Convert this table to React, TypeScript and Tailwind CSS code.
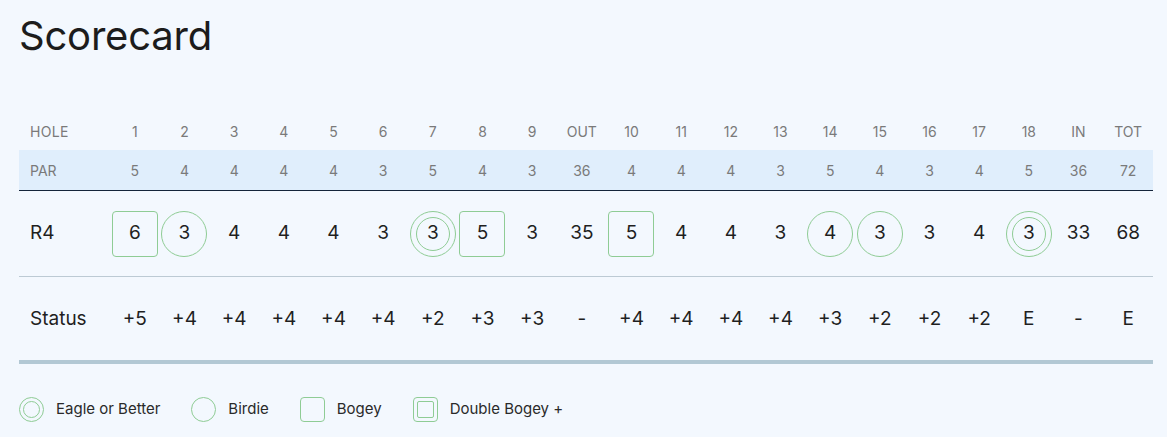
import React from 'react';

type Mark = 'eagle' | 'birdie' | 'bogey' | 'double' | null;

const holes = ['1', '2', '3', '4', '5', '6', '7', '8', '9', 'OUT', '10', '11', '12', '13', '14', '15', '16', '17', '18', 'IN', 'TOT'];
const par = ['5', '4', '4', '4', '4', '3', '5', '4', '3', '36', '4', '4', '4', '3', '5', '4', '3', '4', '5', '36', '72'];
const score = ['6', '3', '4', '4', '4', '3', '3', '5', '3', '35', '5', '4', '4', '3', '4', '3', '3', '4', '3', '33', '68'];
const marks: Mark[] = ['bogey', 'birdie', null, null, null, null, 'eagle', 'bogey', null, null, 'bogey', null, null, null, 'birdie', 'birdie', null, null, 'eagle', null, null];
const status = ['+5', '+4', '+4', '+4', '+4', '+4', '+2', '+3', '+3', '-', '+4', '+4', '+4', '+4', '+3', '+2', '+2', '+2', 'E', '-', 'E'];

const grid = 'grid grid-cols-[91px_repeat(21,minmax(0,1fr))] items-center';

function ScoreCell({ value, mark }: { value: string; mark: Mark }) {
  if (mark === 'bogey') {
    return (
      <div className="flex h-[46px] w-[46px] items-center justify-center rounded-[4px] border border-[#8fcc95]">{value}</div>
    );
  }
  if (mark === 'birdie') {
    return (
      <div className="flex h-[46px] w-[46px] items-center justify-center rounded-full border border-[#8fcc95]">{value}</div>
    );
  }
  if (mark === 'eagle') {
    return (
      <div className="flex h-[46px] w-[46px] items-center justify-center rounded-full border border-[#8fcc95]">
        <div className="flex h-[34px] w-[34px] items-center justify-center rounded-full border border-[#8fcc95]">{value}</div>
      </div>
    );
  }
  return <div className="flex h-[46px] w-[46px] items-center justify-center">{value}</div>;
}

function LegendIcon({ kind }: { kind: Exclude<Mark, null> }) {
  if (kind === 'eagle') {
    return (
      <div className="flex h-[25px] w-[25px] items-center justify-center rounded-full border border-[#8fcc95]">
        <div className="h-[17px] w-[17px] rounded-full border border-[#8fcc95]" />
      </div>
    );
  }
  if (kind === 'birdie') {
    return <div className="h-[25px] w-[25px] rounded-full border border-[#8fcc95]" />;
  }
  if (kind === 'bogey') {
    return <div className="h-[25px] w-[25px] rounded-[4px] border border-[#8fcc95]" />;
  }
  return (
    <div className="flex h-[25px] w-[25px] items-center justify-center rounded-[4px] border border-[#8fcc95]">
      <div className="h-[17px] w-[17px] rounded-[2px] border border-[#8fcc95]" />
    </div>
  );
}

export default function App() {
  return (
    <div className="h-[437px] w-[1167px] overflow-hidden bg-[#f3f8fe] px-[19px] text-[#1f1f1f]" style={{ fontFamily: 'Inter, "Noto Sans", sans-serif' }}>
      <h1 className="pt-[12px] text-[40px] font-normal leading-[48px] tracking-[-0.2px] text-[#1c1c1c]">Scorecard</h1>

      <div className="mt-[52px] w-[1134px]">
        <div className={`${grid} h-[38px] text-[14px] text-[#7a7a7a]`}>
          <div className="pl-[11px] tracking-[0.3px]">HOLE</div>
          {holes.map((h, i) => (
            <div key={i} className="text-center">{h}</div>
          ))}
        </div>

        <div className={`${grid} h-[41px] border-b border-[#14243a] bg-[#e0eefc] text-[14px] text-[#7a7a7a]`}>
          <div className="pl-[11px]">PAR</div>
          {par.map((p, i) => (
            <div key={i} className="text-center">{p}</div>
          ))}
        </div>

        <div className={`${grid} h-[86px] border-b border-[#bccad4] text-[19px]`}>
          <div className="pl-[11px]">R4</div>
          {score.map((s, i) => (
            <div key={i} className="flex justify-center">
              <ScoreCell value={s} mark={marks[i]} />
            </div>
          ))}
        </div>

        <div className={`${grid} h-[87px] border-b-4 border-[#b2c8d4] pt-[2px] text-[19px]`}>
          <div className="pl-[11px]">Status</div>
          {status.map((s, i) => (
            <div key={i} className="text-center">{s}</div>
          ))}
        </div>
      </div>

      <div className="mt-[33px] flex items-center text-[15px] text-[#2a2a2a]">
        <div className="flex items-center gap-[12px]">
          <LegendIcon kind="eagle" />
          <span>Eagle or Better</span>
        </div>
        <div className="ml-[31px] flex items-center gap-[12px]">
          <LegendIcon kind="birdie" />
          <span>Birdie</span>
        </div>
        <div className="ml-[31px] flex items-center gap-[12px]">
          <LegendIcon kind="bogey" />
          <span>Bogey</span>
        </div>
        <div className="ml-[31px] flex items-center gap-[12px]">
          <LegendIcon kind="double" />
          <span>Double Bogey +</span>
        </div>
      </div>
    </div>
  );
}
